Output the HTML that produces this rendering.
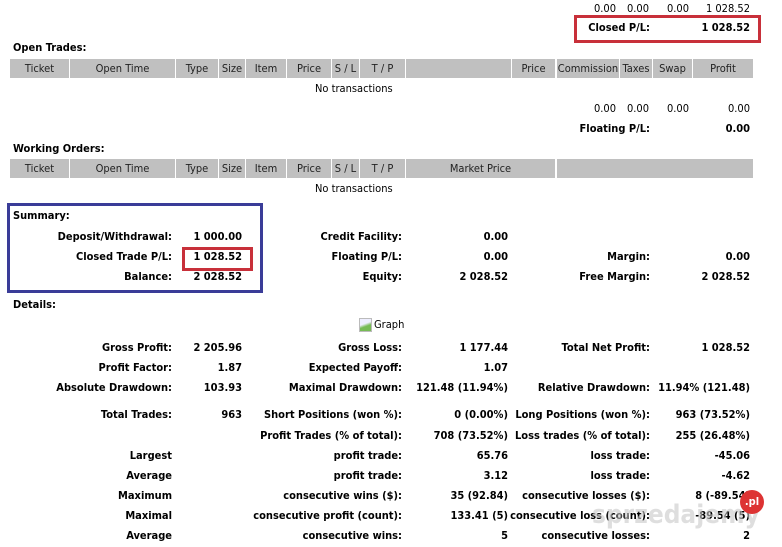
<!DOCTYPE html>
<html><head><meta charset="utf-8"><style>
body{margin:0;width:782px;height:547px;background:#fff;position:relative;overflow:hidden;font-family:Tahoma,"DejaVu Sans Condensed","Liberation Sans",sans-serif;font-size:11px;color:#000}
.t{position:absolute;white-space:nowrap;line-height:14px}
.b{font-weight:bold}
.h{position:absolute;top:59px;height:19px;background:#c0c0c0;line-height:19px;text-align:center;color:#222}
.h2{top:159px}
.box{position:absolute;box-sizing:border-box}
</style></head><body>
<!-- top -->
<div class="t" style="right:166px;top:2px">0.00</div>
<div class="t" style="right:133px;top:2px">0.00</div>
<div class="t" style="right:93px;top:2px">0.00</div>
<div class="t" style="right:32px;top:2px">1 028.52</div>
<div class="t b" style="right:132px;top:21px">Closed P/L:</div>
<div class="t b" style="right:32px;top:21px">1 028.52</div>
<div class="box" style="left:574px;top:15px;width:187px;height:28px;border:3px solid #c8303a"></div>

<div class="t b" style="left:13px;top:41px">Open Trades:</div>
<div class="h" style="left:10px;width:59px">Ticket</div>
<div class="h" style="left:70px;width:105px">Open Time</div>
<div class="h" style="left:176px;width:42px">Type</div>
<div class="h" style="left:219px;width:26px">Size</div>
<div class="h" style="left:246px;width:40px">Item</div>
<div class="h" style="left:287px;width:44px">Price</div>
<div class="h" style="left:332px;width:27px">S / L</div>
<div class="h" style="left:360px;width:45px">T / P</div>
<div class="h" style="left:406px;width:105px"></div>
<div class="h" style="left:512px;width:43px">Price</div>
<div class="h" style="left:557px;width:62px">Commission</div>
<div class="h" style="left:620px;width:32px">Taxes</div>
<div class="h" style="left:653px;width:39px">Swap</div>
<div class="h" style="left:693px;width:60px">Profit</div>
<div class="t" style="left:315px;top:82px">No transactions</div>
<div class="t" style="right:166px;top:102px">0.00</div>
<div class="t" style="right:133px;top:102px">0.00</div>
<div class="t" style="right:93px;top:102px">0.00</div>
<div class="t" style="right:32px;top:102px">0.00</div>
<div class="t b" style="right:132px;top:122px">Floating P/L:</div>
<div class="t b" style="right:32px;top:122px">0.00</div>

<div class="t b" style="left:13px;top:142px">Working Orders:</div>
<div class="h h2" style="left:10px;width:59px">Ticket</div>
<div class="h h2" style="left:70px;width:105px">Open Time</div>
<div class="h h2" style="left:176px;width:42px">Type</div>
<div class="h h2" style="left:219px;width:26px">Size</div>
<div class="h h2" style="left:246px;width:40px">Item</div>
<div class="h h2" style="left:287px;width:44px">Price</div>
<div class="h h2" style="left:332px;width:27px">S / L</div>
<div class="h h2" style="left:360px;width:45px">T / P</div>
<div class="h h2" style="left:406px;width:149px">Market Price</div>
<div class="h h2" style="left:557px;width:196px"></div>
<div class="t" style="left:315px;top:182px">No transactions</div>

<div class="box" style="left:7px;top:203px;width:256px;height:90px;border:3px solid #3a3c98"></div>
<div class="box" style="left:182px;top:247px;width:71px;height:24px;border:3px solid #c8303a"></div>
<div class="t b" style="left:13px;top:209px">Summary:</div>

<div class="t b" style="right:610px;top:230px">Deposit/Withdrawal:</div><div class="t b" style="right:540px;top:230px">1 000.00</div>
<div class="t b" style="right:380px;top:230px">Credit Facility:</div><div class="t b" style="right:274px;top:230px">0.00</div>
<div class="t b" style="right:610px;top:250px">Closed Trade P/L:</div><div class="t b" style="right:540px;top:250px">1 028.52</div>
<div class="t b" style="right:380px;top:250px">Floating P/L:</div><div class="t b" style="right:274px;top:250px">0.00</div>
<div class="t b" style="right:132px;top:250px">Margin:</div><div class="t b" style="right:32px;top:250px">0.00</div>
<div class="t b" style="right:610px;top:270px">Balance:</div><div class="t b" style="right:540px;top:270px">2 028.52</div>
<div class="t b" style="right:380px;top:270px">Equity:</div><div class="t b" style="right:274px;top:270px">2 028.52</div>
<div class="t b" style="right:132px;top:270px">Free Margin:</div><div class="t b" style="right:32px;top:270px">2 028.52</div>

<div class="t b" style="left:13px;top:298px">Details:</div>
<div class="box" style="left:359px;top:318px;width:13px;height:14px;border:1px solid #bbb;background:linear-gradient(160deg,#eef 40%,#7b5 60%)"></div>
<div class="t" style="left:374px;top:318px">Graph</div>

<div class="t b" style="right:610px;top:341px">Gross Profit:</div><div class="t b" style="right:540px;top:341px">2 205.96</div>
<div class="t b" style="right:380px;top:341px">Gross Loss:</div><div class="t b" style="right:274px;top:341px">1 177.44</div>
<div class="t b" style="right:132px;top:341px">Total Net Profit:</div><div class="t b" style="right:32px;top:341px">1 028.52</div>
<div class="t b" style="right:610px;top:361px">Profit Factor:</div><div class="t b" style="right:540px;top:361px">1.87</div>
<div class="t b" style="right:380px;top:361px">Expected Payoff:</div><div class="t b" style="right:274px;top:361px">1.07</div>
<div class="t b" style="right:610px;top:381px">Absolute Drawdown:</div><div class="t b" style="right:540px;top:381px">103.93</div>
<div class="t b" style="right:380px;top:381px">Maximal Drawdown:</div><div class="t b" style="right:274px;top:381px">121.48 (11.94%)</div>
<div class="t b" style="right:132px;top:381px">Relative Drawdown:</div><div class="t b" style="right:32px;top:381px">11.94% (121.48)</div>

<div class="t b" style="right:610px;top:408px">Total Trades:</div><div class="t b" style="right:540px;top:408px">963</div>
<div class="t b" style="right:380px;top:408px">Short Positions (won %):</div><div class="t b" style="right:274px;top:408px">0 (0.00%)</div>
<div class="t b" style="right:132px;top:408px">Long Positions (won %):</div><div class="t b" style="right:32px;top:408px">963 (73.52%)</div>
<div class="t b" style="right:380px;top:429px">Profit Trades (% of total):</div><div class="t b" style="right:274px;top:429px">708 (73.52%)</div>
<div class="t b" style="right:132px;top:429px">Loss trades (% of total):</div><div class="t b" style="right:32px;top:429px">255 (26.48%)</div>
<div class="t b" style="right:610px;top:449px">Largest</div>
<div class="t b" style="right:380px;top:449px">profit trade:</div><div class="t b" style="right:274px;top:449px">65.76</div>
<div class="t b" style="right:132px;top:449px">loss trade:</div><div class="t b" style="right:32px;top:449px">-45.06</div>
<div class="t b" style="right:610px;top:469px">Average</div>
<div class="t b" style="right:380px;top:469px">profit trade:</div><div class="t b" style="right:274px;top:469px">3.12</div>
<div class="t b" style="right:132px;top:469px">loss trade:</div><div class="t b" style="right:32px;top:469px">-4.62</div>
<div class="t b" style="right:610px;top:489px">Maximum</div>
<div class="t b" style="right:380px;top:489px">consecutive wins ($):</div><div class="t b" style="right:274px;top:489px">35 (92.84)</div>
<div class="t b" style="right:132px;top:489px">consecutive losses ($):</div><div class="t b" style="right:32px;top:489px">8 (-89.54)</div>
<div class="t b" style="right:610px;top:509px">Maximal</div>
<div class="t b" style="right:380px;top:509px">consecutive profit (count):</div><div class="t b" style="right:274px;top:509px">133.41 (5)</div>
<div class="t b" style="right:132px;top:509px">consecutive loss (count):</div><div class="t b" style="right:32px;top:509px">-89.54 (5)</div>
<div class="t b" style="right:610px;top:529px">Average</div>
<div class="t b" style="right:380px;top:529px">consecutive wins:</div><div class="t b" style="right:274px;top:529px">5</div>
<div class="t b" style="right:132px;top:529px">consecutive losses:</div><div class="t b" style="right:32px;top:529px">2</div>

<div class="t" style="left:592px;top:500px;font-size:26px;line-height:30px;color:rgba(200,200,200,0.6);font-weight:bold">sprzedajemy</div>
<div class="box" style="left:740px;top:490px;width:24px;height:24px;border-radius:50%;background:#d33;color:#fff;font-size:11px;font-weight:bold;text-align:center;line-height:24px">.pl</div>
</body></html>
